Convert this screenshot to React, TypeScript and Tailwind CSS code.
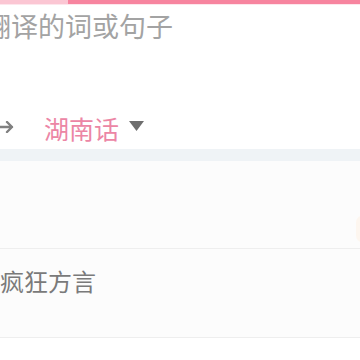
import React from "react";

export default function App() {
  const font = { fontFamily: '"Noto Sans CJK SC", "Noto Sans", sans-serif' };
  return (
    <div className="w-[360px] h-[360px] bg-white overflow-hidden flex flex-col" style={font}>
      <div className="flex h-[4px] shrink-0">
        <div className="w-[68px] bg-[#fbc6d3]" />
        <div className="flex-1 bg-[#f7849f]" />
      </div>
      <div className="h-[1px] bg-[#fde6ec] shrink-0" />
      <div className="h-[104px] shrink-0 pt-[6px]">
        <div className="-ml-[16px] text-[27px] leading-[30px] text-[#a3a3a3] whitespace-nowrap">翻译的词或句子</div>
      </div>
      <div className="h-[40px] shrink-0 flex items-center">
        <svg width="14" height="12" viewBox="0 0 14 12" className="shrink-0 -mt-[4px]">
          <path d="M0 6 H12 M7 1 L12 6 L7 11" fill="none" stroke="#808080" strokeWidth="2.4" strokeLinecap="round" strokeLinejoin="round" />
        </svg>
        <span className="ml-[30px] text-[25px] leading-none text-[#ec86a5] -mt-[2px]">湖南话</span>
        <svg width="15" height="10" viewBox="0 0 15 10" className="ml-[10px] shrink-0 -mt-[6px]">
          <path d="M0 0 H15 L7.5 10 Z" fill="#6e6e6e" />
        </svg>
      </div>
      <div className="h-[12px] bg-[#eff3f6] shrink-0" />
      <div className="h-[88px] bg-[#fcfcfc] border-b border-[#eeeeee] shrink-0 relative">
        <div className="absolute right-[-8px] top-[55px] w-[12px] h-[26px] rounded-full bg-[#fdf3ea] opacity-70" />
      </div>
      <div className="h-[89px] bg-[#fcfcfc] border-b border-[#eeeeee] shrink-0 flex items-center">
        <span className="text-[24px] leading-none text-[#7a7a7a] -mt-[24px]">疯狂方言</span>
      </div>
      <div className="flex-1 bg-white" />
    </div>
  );
}
